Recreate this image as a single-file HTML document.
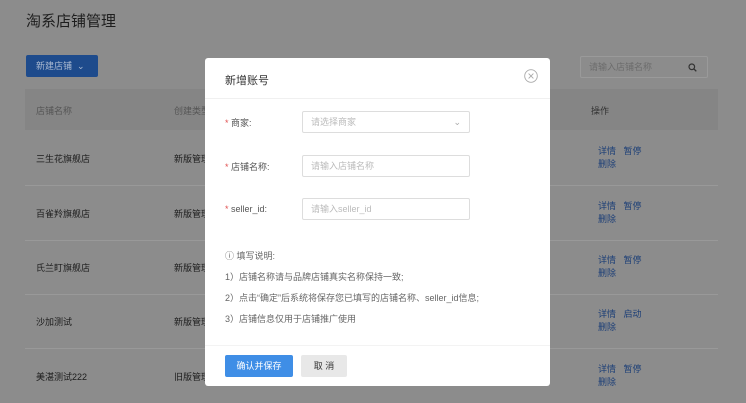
<!DOCTYPE html><html><head><meta charset="utf-8"><style>
*{margin:0;padding:0;box-sizing:border-box}
body{width:746px;height:403px;overflow:hidden;background:#8c8c8c;font-family:"Liberation Sans","Noto Sans CJK SC",sans-serif;position:relative;font-size:9px;color:#222}
.a{position:absolute}
.t{color:#1c1c1c}
.link{color:#1d3f77}
</style></head><body>
<div class="a" style="left:26px;top:10px;font-size:15px;color:#1e1e1e">淘系店铺管理</div>
<div class="a" style="left:26px;top:55px;width:72px;height:22px;background:#1e4b8c;border-radius:2px;color:#aab9d0;font-size:9px;line-height:22px;padding-left:10px">新建店铺 &nbsp;⌄</div>
<div class="a" style="left:580px;top:56px;width:128px;height:22px;border:1px solid #9a9a9a;border-radius:2px;color:#6c6c6c;line-height:20px;padding-left:8px;font-size:9px">请输入店铺名称<svg style="position:absolute;right:10px;top:6px" width="9" height="9" viewBox="0 0 9 9"><circle cx="3.8" cy="3.8" r="2.8" fill="none" stroke="#333" stroke-width="1.2"/><path d="M6 6L8.3 8.3" stroke="#333" stroke-width="1.3"/></svg></div>
<div class="a" style="left:25px;top:89px;width:693px;height:41px;background:#858585"></div>
<div class="a" style="left:36px;top:104px;color:#555">店铺名称</div>
<div class="a" style="left:174px;top:104px;color:#555">创建类型</div>
<div class="a" style="left:591px;top:104px;color:#333">操作</div>
<div class="a" style="left:25px;top:185px;width:693px;height:1px;background:#999"></div>
<div class="a" style="left:25px;top:240px;width:693px;height:1px;background:#999"></div>
<div class="a" style="left:25px;top:294px;width:693px;height:1px;background:#999"></div>
<div class="a" style="left:25px;top:348px;width:693px;height:1px;background:#999"></div>
<div class="a t" style="left:36px;top:152px">三生花旗舰店</div><div class="a t" style="left:174px;top:152px">新版管理</div>
<div class="a t" style="left:36px;top:207px">百雀羚旗舰店</div><div class="a t" style="left:174px;top:207px">新版管理</div>
<div class="a t" style="left:36px;top:261px">氏兰盯旗舰店</div><div class="a t" style="left:174px;top:261px">新版管理</div>
<div class="a t" style="left:36px;top:315px">沙加测试</div><div class="a t" style="left:174px;top:315px">新版管理</div>
<div class="a t" style="left:36px;top:370px">美湛测试222</div><div class="a t" style="left:174px;top:370px">旧版管理</div>
<div class="a link" style="left:598px;top:145px;line-height:13px">详情 &nbsp;&nbsp;暂停<br>删除</div>
<div class="a link" style="left:598px;top:200px;line-height:13px">详情 &nbsp;&nbsp;暂停<br>删除</div>
<div class="a link" style="left:598px;top:254px;line-height:13px">详情 &nbsp;&nbsp;暂停<br>删除</div>
<div class="a link" style="left:598px;top:308px;line-height:13px">详情 &nbsp;&nbsp;启动<br>删除</div>
<div class="a link" style="left:598px;top:363px;line-height:13px">详情 &nbsp;&nbsp;暂停<br>删除</div>

<div class="a" style="left:205px;top:58px;width:345px;height:328px;background:#fff;border-radius:3px">
<div class="a" style="left:20px;top:14px;font-size:11px;color:#333">新增账号</div>
<svg class="a" style="left:319px;top:11px" width="14" height="14" viewBox="0 0 14 14"><circle cx="7" cy="7" r="6.3" fill="none" stroke="#aaa" stroke-width="0.9"/><path d="M4.6 4.6L9.4 9.4M9.4 4.6L4.6 9.4" stroke="#aaa" stroke-width="0.9"/></svg>
<div class="a" style="left:0;top:40px;width:345px;height:1px;background:#f0f0f0"></div>
<div class="a" style="left:20px;top:58px;color:#555"><span style="color:#e05050">*</span> 商家:</div>
<div class="a" style="left:97px;top:53px;width:168px;height:22px;border:1px solid #ddd;border-radius:2px;color:#bbb;line-height:20px;padding-left:8px">请选择商家<span style="position:absolute;right:8px;color:#aaa">⌄</span></div>
<div class="a" style="left:20px;top:102px;color:#555"><span style="color:#e05050">*</span> 店铺名称:</div>
<div class="a" style="left:97px;top:97px;width:168px;height:22px;border:1px solid #ddd;border-radius:2px;color:#bbb;line-height:20px;padding-left:8px">请输入店铺名称</div>
<div class="a" style="left:20px;top:146px;color:#555"><span style="color:#e05050">*</span> seller_id:</div>
<div class="a" style="left:97px;top:140px;width:168px;height:22px;border:1px solid #ddd;border-radius:2px;color:#bbb;line-height:20px;padding-left:8px">请输入seller_id</div>
<div class="a" style="left:20px;top:188px;color:#666;line-height:21px">ⓘ 填写说明:<br>1）店铺名称请与品牌店铺真实名称保持一致;<br>2）点击“确定”后系统将保存您已填写的店铺名称、seller_id信息;<br>3）店铺信息仅用于店铺推广使用</div>
<div class="a" style="left:0;top:287px;width:345px;height:1px;background:#f3f3f3"></div>
<div class="a" style="left:20px;top:297px;width:68px;height:22px;background:#3f8ee6;border-radius:2px;color:#fff;text-align:center;line-height:22px">确认并保存</div>
<div class="a" style="left:96px;top:297px;width:46px;height:22px;background:#e8e8e8;border-radius:2px;color:#333;text-align:center;line-height:22px">取 消</div>
</div>
</body></html>
